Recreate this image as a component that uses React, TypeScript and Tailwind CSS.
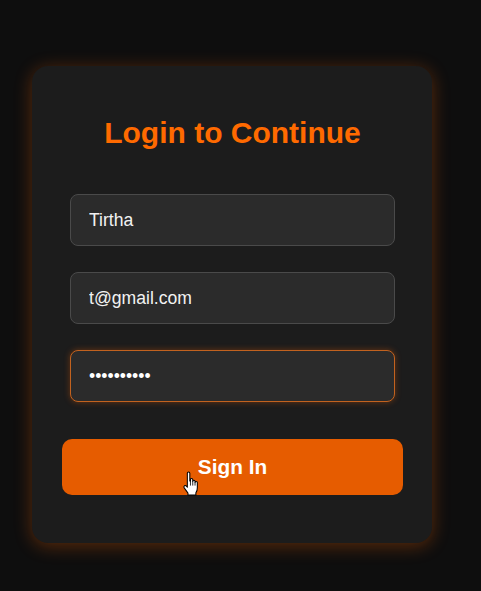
import React from 'react';

function HandCursor() {
  return (
    <svg
      width="19"
      height="25"
      viewBox="0 0 18 24"
      className="absolute left-[182px] top-[471px] pointer-events-none"
    >
      <path
        d="M5 2.2Q5 1 6.2 1Q7.4 1 7.4 2.2V9.5H8V8.2Q8 7.1 9.1 7.1Q10.2 7.1 10.2 8.2V10Q10.2 8.9 11.3 8.9Q12.4 8.9 12.4 10V11Q12.4 10 13.5 10Q14.6 10 14.6 11V16Q14.6 19 13.2 21V23H5.6V21.2L2 16.2Q1.2 15 2.2 14.2Q3.2 13.5 4.1 14.5L5 15.6Z"
        fill="#fff"
        stroke="#000"
        strokeWidth="1"
        strokeLinejoin="round"
      />
      <path d="M8 9.5V14M10.2 10V14M12.4 11V14" stroke="#000" strokeWidth="0.8" />
    </svg>
  );
}

export default function App() {
  return (
    <div className="relative w-[481px] h-[591px] bg-[#0e0e0e] pl-[32px] pt-[66px] font-['Liberation_Sans',Arial,sans-serif]">
      <div className="w-[400px] h-[477px] rounded-[16px] bg-[#1c1c1c] shadow-[0_3px_18px_rgba(255,102,0,0.32)] pl-[30px] pt-[50px] flex flex-col">
        <h2 className="w-[341px] text-center text-[30px] leading-[34px] font-bold text-[#ff6a00]">Login to Continue</h2>
        <div className="mt-[44px] flex flex-col gap-[26px] pl-[8px]">
          <input
            readOnly
            value="Tirtha"
            className="h-[52px] w-[325px] rounded-[8px] bg-[#2b2b2b] border border-[#4a4a4a] px-[18px] text-[17.6px] text-[#f2f2f2] outline-none"
          />
          <input
            readOnly
            value="t@gmail.com"
            className="h-[52px] w-[325px] rounded-[8px] bg-[#2b2b2b] border border-[#4a4a4a] px-[18px] text-[17.6px] text-[#f2f2f2] outline-none"
          />
          <input
            readOnly
            type="password"
            value="tirtha1234"
            className="h-[52px] w-[325px] rounded-[8px] bg-[#2b2b2b] border border-[#c2621f] shadow-[0_0_6px_rgba(255,102,0,0.35)] px-[18px] text-[17.6px] text-white outline-none"
          />
        </div>
        <button className="mt-[37px] h-[56px] w-[341px] rounded-[10px] bg-[#e65c00] text-white text-[20.8px] font-bold">
          Sign In
        </button>
      </div>
      <HandCursor />
    </div>
  );
}
